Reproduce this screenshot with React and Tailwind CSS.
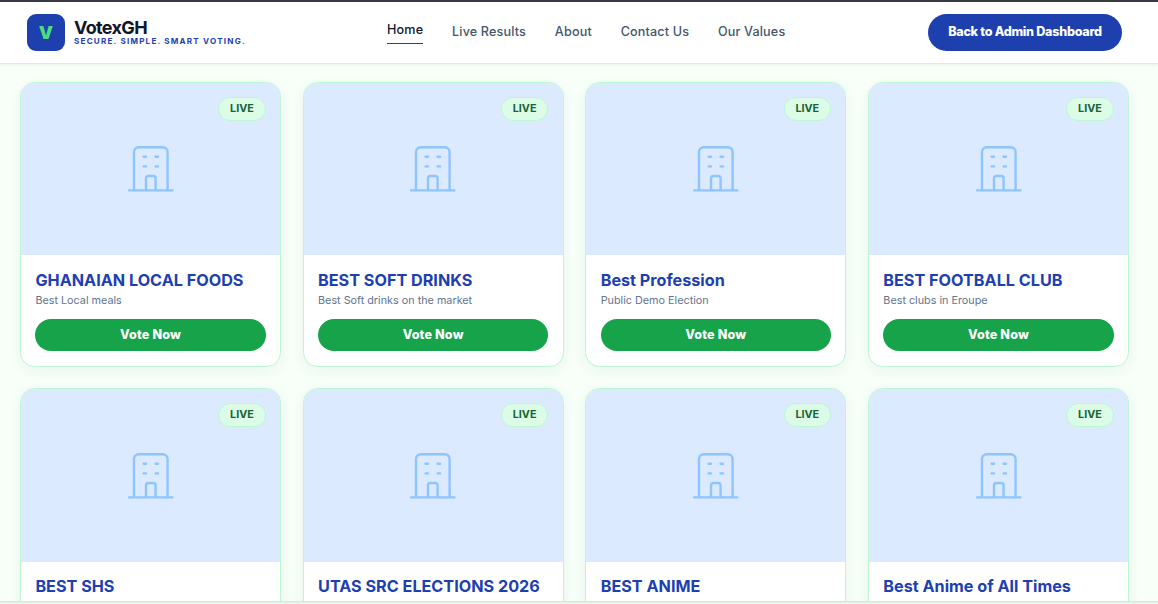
import React from 'react';

const navLinks = ["Live Results", "About", "Contact Us", "Our Values"];

const elections = [
    { title: "GHANAIAN LOCAL FOODS", description: "Best Local meals" },
    { title: "BEST SOFT DRINKS", description: "Best Soft drinks on the market" },
    { title: "Best Profession", description: "Public Demo Election" },
    { title: "BEST FOOTBALL CLUB", description: "Best clubs in Eroupe" },
    { title: "BEST SHS" },
    { title: "UTAS SRC ELECTIONS 2026" },
    { title: "BEST ANIME" },
    { title: "Best Anime of All Times" },
];

const BuildingIcon = () => (
    <svg className="w-[57.6px] h-[57.6px] text-blue-300" fill="none" stroke="currentColor" strokeWidth="1" strokeLinecap="round" strokeLinejoin="round" viewBox="0 0 24 24">
        <path d="M19 21V5a2 2 0 00-2-2H7a2 2 0 00-2 2v16m14 0h2m-2 0h-5m-9 0H3m2 0h5M9 7h1m-1 4h1m4-4h1m-1 4h1m-5 10v-5a1 1 0 011-1h2a1 1 0 011 1v5m-4 0h4" />
    </svg>
);

const Header = () => (
    <header className="flex h-16 shrink-0 items-center border-t-2 border-b border-t-[#383842] border-b-[#e2e8f0] bg-white pl-[27px] pr-9 shadow-[0_1px_3px_rgba(15,23,42,0.06)]">
        <div className="flex w-[360px] items-center gap-[9px]">
            <div className="flex h-[37px] w-[38px] items-center justify-center rounded-[9px] bg-[#1e40af] text-[18px] font-black text-[#4ade80]">
                <span className="leading-none">V</span>
            </div>
            <div className="flex flex-col">
                <span className="text-[18px] font-bold leading-[18px] tracking-[-0.65px] text-slate-900">VotexGH</span>
                <span className="text-[8.1px] font-bold leading-[9px] tracking-[1.21px] text-[#1e40af]">SECURE. SIMPLE. SMART VOTING.</span>
            </div>
        </div>

        <nav className="flex items-center gap-[28.8px] text-[12.6px] font-medium tracking-[0.16px] text-slate-600">
            <a href="#" className="border-b border-[#1e40af] pb-[3px] text-slate-900">Home</a>
            {navLinks.map((link) => (
                <a key={link} href="#">{link}</a>
            ))}
        </nav>

        <button className="ml-auto h-[37px] w-[194px] rounded-full bg-[#1e40af] text-[12.6px] font-extrabold tracking-[-0.28px] text-white">
            Back to Admin Dashboard
        </button>
    </header>
);

const ElectionCard = ({ election }) => (
    <div className="flex h-[285px] flex-col overflow-hidden rounded-[14.4px] border border-[#bbf7d0] bg-white shadow-[0_4px_14px_rgba(22,101,52,0.06)]">
        <div className="relative flex h-[172.8px] shrink-0 items-center justify-center bg-[#dbeafe]">
            <BuildingIcon />
            <span className="absolute right-[14.4px] top-[14.4px] flex h-6 w-[47.4px] items-center justify-center rounded-full border border-[#bbf7d0] bg-[#dcfce7] text-[10.8px] font-bold text-[#166534]">
                LIVE
            </span>
        </div>
        <div className="flex flex-col px-[14.4px] pt-[13.6px]">
            <h3 className="whitespace-nowrap text-[16.2px] font-bold leading-[22px] text-[#1e40af]">{election.title}</h3>
            {election.description && (
                <>
                    <p className="mt-px text-[10.8px] leading-[18px] text-slate-500">{election.description}</p>
                    <button className="mt-[9px] h-8 rounded-full bg-[#16a34a] text-[12.6px] font-extrabold tracking-[0.15px] text-white">
                        Vote Now
                    </button>
                </>
            )}
        </div>
    </div>
);

const App = () => {
    return (
        <div className="flex h-[604px] w-[1158px] flex-col overflow-hidden bg-[#f7fff8] font-['Inter',sans-serif]">
            <Header />
            <main className="h-[537px] shrink-0 overflow-hidden pl-5 pr-[29px] pt-[17.6px]">
                <div className="grid grid-cols-4 gap-x-[21.6px] gap-y-[21.4px]">
                    {elections.map((election) => (
                        <ElectionCard key={election.title} election={election} />
                    ))}
                </div>
            </main>
            <div className="h-[3px] shrink-0 border-t border-[#c9ecd5] bg-[#e3f6ea]" />
        </div>
    );
};

export default App;
